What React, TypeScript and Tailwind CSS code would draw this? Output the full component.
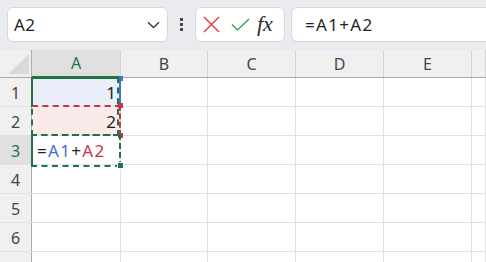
const FONT = "font-['Segoe_UI','Noto_Sans','Open_Sans',sans-serif]";

const COLUMNS = [
  { name: 'A', width: 'w-[89px]' },
  { name: 'B', width: 'w-[87px]' },
  { name: 'C', width: 'w-[88px]' },
  { name: 'D', width: 'w-[88px]' },
  { name: 'E', width: 'w-[88px]' },
  { name: 'F', width: 'flex-1' },
];

const ROWS = [1, 2, 3, 4, 5, 6, 7];

function Toolbar() {
  return (
    <div className="h-[50px] bg-[#e9ebef] flex items-start pt-[7px] pl-[7px] gap-0">
      <div className="w-[161px] h-[35px] bg-white border border-[#d6d8dc] rounded-[6px] flex items-center pl-[6px] pr-[7px]">
        <span className="flex-1 text-[17px] tracking-[0.5px] text-[#1f1f1f]">A2</span>
        <svg width="13" height="8" viewBox="0 0 13 8" fill="none">
          <path d="M1 1.2L6.5 6.5L12 1.2" stroke="#3b3b3b" strokeWidth="1.4" />
        </svg>
      </div>
      <div className="w-[27px] h-[35px] flex flex-col items-center justify-center gap-[2px]">
        <div className="w-[3px] h-[3px] bg-[#4a4a4a]" />
        <div className="w-[3px] h-[3px] bg-[#4a4a4a]" />
        <div className="w-[3px] h-[3px] bg-[#4a4a4a]" />
      </div>
      <div className="w-[90px] h-[35px] bg-white border border-[#d6d8dc] rounded-[6px] flex items-center pl-[7px]">
        <svg width="17" height="17" viewBox="0 0 17 17" fill="none">
          <path d="M1 1L16 16M16 1L1 16" stroke="#e0454d" strokeWidth="1.5" />
        </svg>
        <svg className="ml-[11px]" width="19" height="14" viewBox="0 0 19 14" fill="none">
          <path d="M1 6.5L6.5 12L18 1" stroke="#3fa55b" strokeWidth="1.6" />
        </svg>
        <span className="ml-[7px] font-['Liberation_Serif','DejaVu_Serif',serif] italic text-[22px] text-[#2b2b2b] leading-none pb-[2px]">
          fx
        </span>
      </div>
      <div className="ml-[6px] flex-1 h-[35px] bg-white border border-r-0 border-[#d6d8dc] rounded-l-[6px] flex items-center pl-[13px]">
        <span className="text-[17px] tracking-[1.3px] text-[#1f1f1f]">=A1+A2</span>
      </div>
    </div>
  );
}

function HeaderRow() {
  return (
    <div className="h-[28px] flex bg-[#f0f0f0] border-b border-[#ababab]">
      <div className="w-[32px] h-full border-r border-[#ababab] flex items-end justify-end pr-[2px] pb-[3px]">
        <svg width="21" height="20" viewBox="0 0 21 20">
          <path d="M21 0L21 20L0 20Z" fill="#d9d9d9" />
        </svg>
      </div>
      {COLUMNS.map((col) =>
        col.name === 'A' ? (
          <div
            key="A"
            className={`${col.width} h-[28px] -mb-px border-r border-[#d4d4d4] border-b-2 border-b-[#217346] bg-[#e0e0e0] flex items-center justify-center text-[16px] text-[#217346] pb-[1px]`}
          >
            A
          </div>
        ) : (
          <div
            key={col.name}
            className={`${col.width} h-full border-r border-[#d4d4d4] flex items-center justify-center text-[16px] text-[#444]`}
          >
            {col.name === 'F' ? '' : col.name}
          </div>
        )
      )}
    </div>
  );
}

function Cell({ row, col, width }: { row: number; col: string; width: string }) {
  const bg = row === 1 && col === 'A' ? 'bg-[#e9eef8]' : row === 2 && col === 'A' ? 'bg-[#fbeaea]' : 'bg-white';
  return (
    <div
      className={`${width} h-full border-r border-[#e1e1e1] ${bg} flex items-center pt-[2px] text-[17px] text-[#1f1f1f]`}
    >
      {col === 'A' && row === 1 && <span className="ml-auto pr-[4px]">1</span>}
      {col === 'A' && row === 2 && <span className="ml-auto pr-[4px]">2</span>}
      {col === 'A' && row === 3 && (
        <span className="pl-[5px] tracking-[1.3px]">
          =<span className="text-[#3b6fd6]">A1</span>+<span className="text-[#c8344a]">A2</span>
        </span>
      )}
    </div>
  );
}

function Selections() {
  return (
    <>
      {/* A1 reference (blue) */}
      <div className="absolute left-[32px] top-0 w-[89px] h-[28px] border-r-2 border-[#4472c4]" />
      <div className="absolute left-[118px] top-[-2px] w-[5px] h-[5px] bg-[#4472c4]" />
      {/* A2 reference (red) */}
      <div className="absolute left-[32px] top-[27px] w-[89px] h-[31px] border-t-2 border-r-2 border-dashed border-[#c0394b]" />
      <div className="absolute left-[118px] top-[25px] w-[5px] h-[5px] bg-[#c0394b]" />
      <div className="absolute left-[118px] top-[55px] w-[5px] h-[5px] bg-[#c0394b]" />
      {/* copy marquee A1:A2 */}
      <div className="absolute left-[31px] top-[-1px] w-[88px] h-[59px] border-2 border-dashed border-[#217346]" />
      <div className="absolute left-[31px] top-[-1px] w-[88px] h-[30px] border-t-2 border-l-2 border-[#217346]" />
      {/* active cell A3 */}
      <div className="absolute left-[31px] top-[56px] w-[90px] h-[33px] border-2 border-dashed border-[#217346]" />
      <div className="absolute left-[31px] top-[56px] w-[90px] h-[33px] border-l-2 border-[#217346]" />
      <div className="absolute left-[117px] top-[84px] w-[5px] h-[5px] bg-[#217346] border border-white box-content" />
    </>
  );
}

export default function App() {
  return (
    <div className={`w-[486px] h-[262px] overflow-hidden bg-white ${FONT}`}>
      <Toolbar />
      <HeaderRow />
      <div className="relative">
        {ROWS.map((row) => (
          <div key={row} className="h-[29px] flex border-b border-[#e1e1e1]">
            <div
              className={`w-[32px] h-full border-r border-[#ababab] flex items-center justify-center pt-[2px] text-[16px] ${
                row === 3 ? 'bg-[#e0e0e0] text-[#217346]' : 'bg-[#f0f0f0] text-[#444]'
              }`}
            >
              {row < 7 ? row : ''}
            </div>
            {COLUMNS.map((col) => (
              <Cell key={col.name} row={row} col={col.name} width={col.width} />
            ))}
          </div>
        ))}
        <Selections />
      </div>
    </div>
  );
}
